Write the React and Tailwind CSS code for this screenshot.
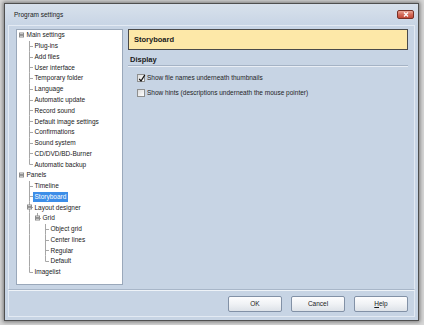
import React from "react";

const ROW_H = 10.77;

const rows = [
  { t: "Main settings", l: 0, kids: true, last: false, anc: [] },
  { t: "Plug-ins", l: 1, anc: [false] },
  { t: "Add files", l: 1, anc: [false] },
  { t: "User interface", l: 1, anc: [false] },
  { t: "Temporary folder", l: 1, anc: [false] },
  { t: "Language", l: 1, anc: [false] },
  { t: "Automatic update", l: 1, anc: [false] },
  { t: "Record sound", l: 1, anc: [false] },
  { t: "Default image settings", l: 1, anc: [false] },
  { t: "Confirmations", l: 1, anc: [false] },
  { t: "Sound system", l: 1, anc: [false] },
  { t: "CD/DVD/BD-Burner", l: 1, anc: [false] },
  { t: "Automatic backup", l: 1, last: true, anc: [false] },
  { t: "Panels", l: 0, kids: true, last: true, anc: [] },
  { t: "Timeline", l: 1, anc: [false] },
  { t: "Storyboard", l: 1, anc: [false], sel: true },
  { t: "Layout designer", l: 1, kids: true, anc: [false] },
  { t: "Grid", l: 2, kids: true, last: true, anc: [false, true] },
  { t: "Object grid", l: 3, anc: [false, true, false] },
  { t: "Center lines", l: 3, anc: [false, true, false] },
  { t: "Regular", l: 3, anc: [false, true, false] },
  { t: "Default", l: 3, last: true, anc: [false, true, false] },
  { t: "Imagelist", l: 1, last: true, anc: [false] },
];

const LINE = "#a6a6a6";

function AncCell({ cont }) {
  return (
    <svg width="8" height={ROW_H} viewBox={`0 0 8 ${ROW_H}`} className="shrink-0">
      {cont && <line x1="4.5" y1="0" x2="4.5" y2={ROW_H} stroke={LINE} strokeWidth="1" />}
    </svg>
  );
}

function OwnCell({ r }) {
  const mid = 5.5;
  return (
    <svg width="8" height={ROW_H} viewBox={`0 0 8 ${ROW_H}`} className="shrink-0">
      {r.l > 0 && (
        <line x1="4.5" y1="0" x2="4.5" y2={r.last ? mid : ROW_H} stroke={LINE} strokeWidth="1" />
      )}
      {r.l > 0 && <line x1="4.5" y1={mid} x2="8" y2={mid} stroke={LINE} strokeWidth="1" />}
      {r.kids && (
        <g>
          <rect x="2.5" y={mid - 2.5} width="4" height="4" fill="#fff" stroke="#8d8d8d" strokeWidth="1" />
          <line x1="3" y1={mid - 0.5} x2="6" y2={mid - 0.5} stroke="#2a2a2a" strokeWidth="1" />
        </g>
      )}
    </svg>
  );
}

function TreeRow({ r }) {
  const cells = [];
  for (let k = 0; k < r.l; k++) cells.push(<AncCell key={k} cont={r.anc[k]} />);
  return (
    <div className="flex items-center h-[10.77px]">
      {cells}
      <OwnCell r={r} />
      <span
        className={
          "px-[1.5px] h-[10px] leading-[10px] whitespace-nowrap " +
          (r.sel ? "bg-[#3d8ee8] text-white" : "text-[#1a1a1a]")
        }
      >
        {r.t}
      </span>
    </div>
  );
}

function CheckBox({ checked }) {
  return (
    <div className="relative w-[8px] h-[8px] shrink-0 border border-[#8e8f8f] bg-gradient-to-br from-[#dcdcdc] to-[#ffffff]">
      {checked && (
        <svg className="absolute left-[0px] top-[-1px]" width="8" height="9" viewBox="0 0 8 9">
          <path d="M1.2 4.8 L3 7 L6.8 1" fill="none" stroke="#111" strokeWidth="1.3" />
        </svg>
      )}
    </div>
  );
}

function Button({ children }) {
  return (
    <div className="w-[54px] h-[16px] flex items-center justify-center rounded-[2px] border border-[#8291a6] bg-gradient-to-b from-[#fdfdfe] via-[#f0f2f5] to-[#dde2e8] text-[6.5px] text-[#1a1a1a]">
      {children}
    </div>
  );
}

export default function App() {
  return (
    <div className="w-[424px] h-[325px] bg-[#d6d6d6] pt-[3px] pl-[4px] font-['Liberation_Sans',Arial,sans-serif] overflow-hidden">
      <div className="w-[415px] h-[318px] border border-[#4f4f4f] bg-[#c7d4e4] flex flex-col shadow-[0_0_4px_1px_rgba(0,0,0,0.45)]">
        {/* title bar */}
        <div className="h-[21px] shrink-0 flex items-center justify-between pl-[9px] pr-[4px] bg-gradient-to-b from-[#d8e1ec] to-[#c8d5e5]">
          <span className="text-[6.5px] text-[#1b1b1b]">Program settings</span>
          <div className="w-[17px] h-[9px] rounded-[2px] border border-[#7a3026] bg-gradient-to-b from-[#eaa596] via-[#d46a59] to-[#c24836] flex items-center justify-center">
            <svg width="6" height="5" viewBox="0 0 6 5">
              <path d="M1 0.5 L5 4.5 M5 0.5 L1 4.5" stroke="#fff" strokeWidth="1.3" />
            </svg>
          </div>
        </div>

        {/* main area */}
        <div className="h-[265px] shrink-0 mx-[3px] border border-[#e3eaf3] border-b-[#a8b6c8] flex pl-[7px] pt-[3px] pr-[6px] pb-[4px] gap-[5px]">
          {/* tree */}
          <div className="w-[107px] h-[256px] bg-white border border-[#9aa8ba] text-[6.5px] pt-[0px] overflow-hidden">
            {rows.map((r, i) => (
              <TreeRow key={i} r={r} />
            ))}
          </div>

          {/* right panel */}
          <div className="w-[280px] flex flex-col">
            <div className="h-[21px] border border-[#4a4a4a] bg-[#fde8a8] flex items-center pl-[5px]">
              <span className="text-[7.5px] font-bold text-[#1a1a1a]">Storyboard</span>
            </div>
            <div className="mt-[5px] h-[11px] border-b border-[#a5b3c5] shadow-[0_1px_0_#e9eef5] pl-[2px] text-[7.5px] leading-[10px] font-bold text-[#1a1a1a]">
              Display
            </div>
            <div className="mt-[8px] pl-[9px] flex flex-col gap-[6.5px] text-[6.5px] text-[#1e1e1e]">
              <div className="h-[8px] flex items-center gap-[2px]">
                <CheckBox checked />
                <span className="whitespace-nowrap">Show file names underneath thumbnails</span>
              </div>
              <div className="h-[8px] flex items-center gap-[2px]">
                <CheckBox />
                <span className="whitespace-nowrap">Show hints (descriptions underneath the mouse pointer)</span>
              </div>
            </div>
          </div>
        </div>

        {/* footer */}
        <div className="h-[27px] shrink-0 mx-[3px] border border-[#e3eaf3] border-t-[#eef3f8] flex items-center justify-end gap-[9px] pr-[6px]">
          <Button>OK</Button>
          <Button>Cancel</Button>
          <Button>
            <span>
              <span className="underline">H</span>elp
            </span>
          </Button>
        </div>
      </div>
    </div>
  );
}
